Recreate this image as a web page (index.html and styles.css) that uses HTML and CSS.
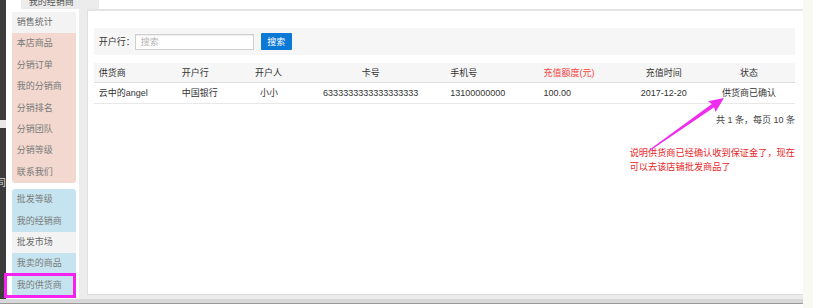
FILE: index.html
```html
<!DOCTYPE html>
<html lang="zh-CN">
<head>
  <meta charset="UTF-8" />
  <title>我的供货商</title>
  <link rel="stylesheet" href="styles.css">
</head>
<body>
<div class="screen">
  <div class="frame">
    <div class="window">
      <div class="edge">
        <div class="edge-top"></div>
        <div class="edge-gap"></div>
        <div class="edge-bottom"><span>司</span></div>
      </div>
      <div class="app">
        <div class="tabs"><span class="tab">我的经销商</span></div>
        <div class="workspace">
          <aside class="sidebar">
            <a class="nav-item plain" href="#">销售统计</a>
            <div class="nav-group pink">
              <a class="nav-item" href="#">本店商品</a>
              <a class="nav-item" href="#">分销订单</a>
              <a class="nav-item" href="#">我的分销商</a>
              <a class="nav-item" href="#">分销排名</a>
              <a class="nav-item" href="#">分销团队</a>
              <a class="nav-item" href="#">分销等级</a>
              <a class="nav-item" href="#">联系我们</a>
            </div>
            <div class="nav-group blue">
              <a class="nav-item" href="#">批发等级</a>
              <a class="nav-item" href="#">我的经销商</a>
              <a class="nav-item plain" href="#">批发市场</a>
              <a class="nav-item" href="#">我卖的商品</a>
              <a class="nav-item current" href="#">我的供货商</a>
            </div>
          </aside>

          <main class="main">
            <form class="search" onsubmit="return false">
              <label for="bank">开户行：</label>
              <input type="text" id="bank" placeholder="搜索" />
              <button type="submit">搜索</button>
            </form>

            <table class="list">
              <colgroup>
                <col class="c1"><col class="c2"><col class="c3"><col class="c4">
                <col class="c5"><col class="c6"><col class="c7"><col class="c8">
              </colgroup>
              <thead>
                <tr>
                  <th>供货商</th>
                  <th>开户行</th>
                  <th>开户人</th>
                  <th class="mid card">卡号</th>
                  <th>手机号</th>
                  <th class="red">充值额度(元)</th>
                  <th class="mid">充值时间</th>
                  <th class="mid last">状态</th>
                </tr>
              </thead>
              <tbody>
                <tr>
                  <td>云中的angel</td>
                  <td>中国银行</td>
                  <td class="indent">小小</td>
                  <td class="mid card">6333333333333333333</td>
                  <td>13100000000</td>
                  <td>100.00</td>
                  <td class="mid">2017-12-20</td>
                  <td class="mid last">供货商已确认</td>
                </tr>
              </tbody>
            </table>

            <div class="pager">共 1 条，每页 10 条</div>

            <p class="note">说明供货商已经确认收到保证金了，现在<br>可以去该店铺批发商品了</p>
          </main>
        </div>
      </div>
    </div>
    <div class="statusbar"></div>
  </div>
  <div class="rightstrip"></div>
</div>

<svg class="arrow" width="813" height="308" viewBox="0 0 813 308">
  <g transform="translate(650 150) rotate(-35.1)">
    <polygon points="0,-0.5 77,-2 75.5,-6.5 90.4,0 75.5,6.5 77,2 0,0.5" fill="#ee2bee"/>
  </g>
</svg>
</body>
</html>
```

FILE: styles.css
```css
* {
  box-sizing: border-box;
}

html, body {
  margin: 0;
}

body {
  position: relative;
  width: 813px;
  height: 308px;
  overflow: hidden;
  background: #fff;
  font-family: "Liberation Sans", "Noto Sans CJK SC", sans-serif;
  font-size: 9px;
  color: #333;
}

.screen {
  display: flex;
  height: 308px;
}

.frame {
  width: 803px;
  display: flex;
  flex-direction: column;
}

.rightstrip {
  flex: 1;
  background: #f9f9f4;
}

.window {
  display: flex;
  height: 299px;
}

/* dark strip of the window behind */
.edge {
  width: 7px;
  display: flex;
  flex-direction: column;
  background: #3c3c3c;
  overflow: hidden;
}

.edge-top {
  height: 120px;
}

.edge-gap {
  height: 8px;
  background: #e8e8e8;
}

.edge-bottom {
  flex: 1;
  padding-top: 50px;
}

.edge-bottom span {
  display: block;
  margin-left: -3px;
  line-height: 10px;
  color: #ddd;
}

.app {
  flex: 1;
  display: flex;
  flex-direction: column;
  background: #ececec;
}

.tabs {
  height: 9px;
  display: flex;
  background: #fff;
  overflow: hidden;
}

.tab {
  width: 78px;
  margin-left: 15px;
  padding-left: 8px;
  margin-top: -5px;
  height: 14px;
  line-height: 14px;
  background: #ececec;
  color: #555;
}

.workspace {
  flex: 1;
  display: flex;
}

/* sidebar */
.sidebar {
  width: 73px;
  background: #fff;
  padding: 3px 3px 0 6px;
}

.nav-item {
  position: relative;
  display: block;
  height: 21.4px;
  line-height: 21.4px;
  padding-left: 5px;
  color: #7a7a7a;
  text-decoration: none;
  white-space: nowrap;
}

.nav-item.plain {
  background: #f3f3f3;
  color: #6a6a6a;
}

.nav-group {
  border-radius: 3px;
}

.nav-group.pink {
  background: #f2d8ce;
  border-radius: 0 0 3px 3px;
  margin-bottom: 6px;
}

.nav-group.blue {
  background: #c5e4ef;
  border-radius: 3px 3px 0 0;
}

.nav-item.current::after {
  content: "";
  position: absolute;
  left: -8px;
  right: 0;
  top: -2px;
  bottom: -2px;
  border: 3px solid #f522f0;
}

/* main panel */
.main {
  flex: 1;
  margin-left: 8px;
  margin-bottom: 4px;
  background: #fff;
  border-top: 2px solid #e4e4e4;
  border-left: 1px solid #e0e0e0;
  border-bottom: 1px solid #dcdcdc;
  padding: 17px 8px 0 6px;
}

.search {
  display: flex;
  align-items: center;
  height: 27px;
  padding-left: 5px;
  background: #f6f6f6;
}

.search label {
  flex: 0 0 34px;
  white-space: nowrap;
  color: #333;
}

.search input {
  width: 119px;
  height: 16px;
  padding: 0 5px;
  border: 1px solid #cfcfcf;
  box-shadow: inset 0 1px 1px rgba(0,0,0,0.07);
  font-family: inherit;
  font-size: 9px;
  outline: none;
}

.search input::placeholder {
  color: #b5b5b5;
}

.search button {
  width: 31px;
  height: 17px;
  margin-left: 7px;
  padding: 0;
  border: none;
  border-radius: 1px;
  background: #0d79d6;
  color: #fff;
  font-family: inherit;
  font-size: 9px;
}

.list {
  width: 100%;
  margin-top: 8px;
  border-collapse: collapse;
  table-layout: fixed;
}

.c1 { width: 83px; }
.c2 { width: 73px; }
.c3 { width: 66px; }
.c4 { width: 129px; }
.c5 { width: 93px; }
.c6 { width: 81px; }
.c7 { width: 88px; }
.c8 { width: 87px; }

.list th,
.list td {
  padding: 0 5px;
  text-align: left;
  white-space: nowrap;
}

.list th {
  height: 19px;
  font-weight: normal;
  background: #f6f6f6;
  border-bottom: 1px solid #dcdcdc;
}

.list td {
  height: 21px;
  border-bottom: 1px solid #e8e8e8;
}

.list .mid {
  text-align: center;
}

.list .card {
  padding-right: 25px;
}

.list .last {
  padding-right: 10px;
}

.list .indent {
  padding-left: 10px;
}

.list .red {
  color: #f6403c;
}

.pager {
  margin-top: 9px;
  line-height: 14px;
  text-align: right;
  color: #444;
}

.note {
  margin: 19px 0 0;
  padding-left: 536px;
  line-height: 14px;
  font-size: 9.2px;
  color: #e8261f;
  white-space: nowrap;
}

.statusbar {
  height: 5px;
  background: #d8d8d8;
  border-bottom: 1px solid #9a9a9a;
}

.arrow {
  position: absolute;
  left: 0;
  top: 0;
  pointer-events: none;
}
```
